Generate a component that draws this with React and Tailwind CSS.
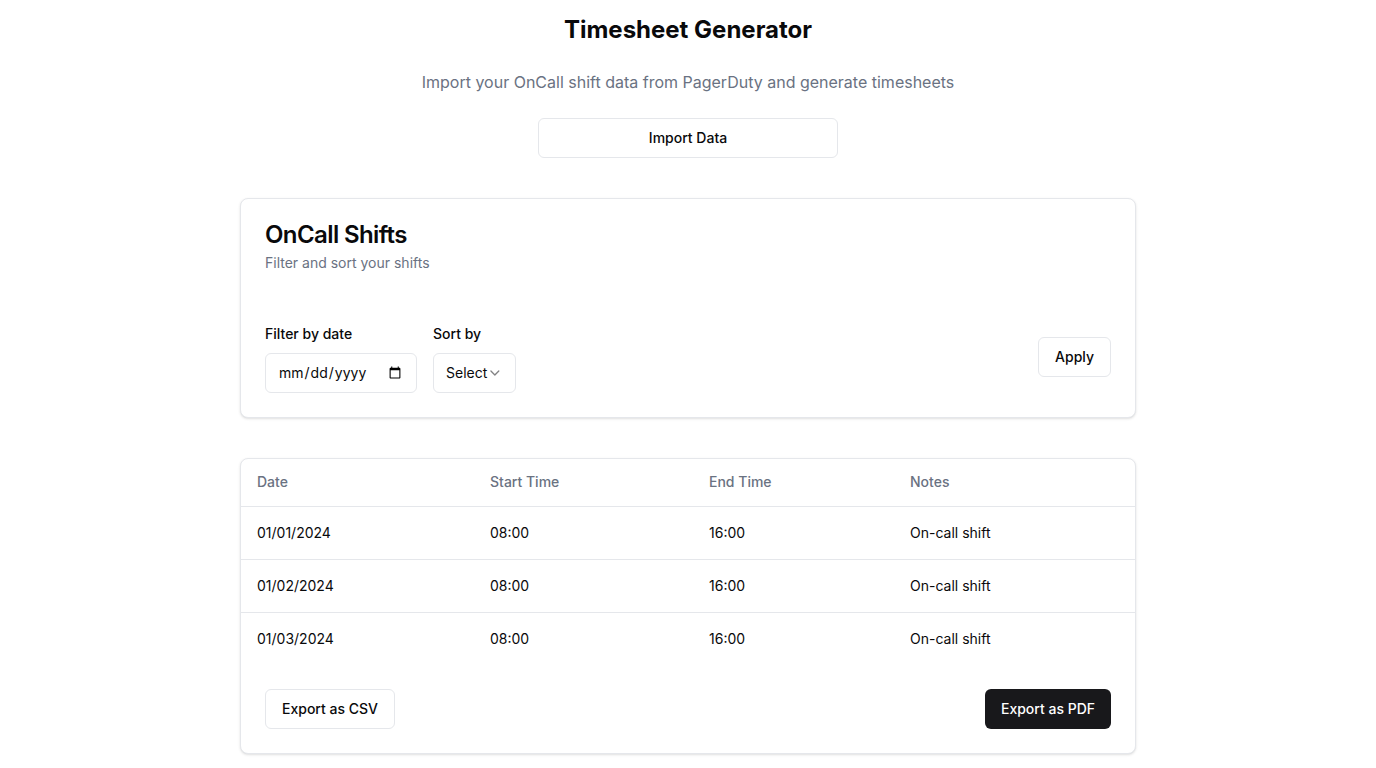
import React from 'react';
import { ChevronDown } from 'lucide-react';

const shifts = [
    { date: '01/01/2024', start: '08:00', end: '16:00', notes: 'On-call shift' },
    { date: '01/02/2024', start: '08:00', end: '16:00', notes: 'On-call shift' },
    { date: '01/03/2024', start: '08:00', end: '16:00', notes: 'On-call shift' },
];

const App = () => {
    return (
        <div className="min-h-screen bg-white text-[#09090b]" style={{ fontFamily: 'Inter, "Noto Sans", sans-serif' }}>
            <div className="max-w-4xl mx-auto pt-[14px] pb-10">
                <h1 className="text-2xl font-bold text-center">Timesheet Generator</h1>
                <p className="mt-6 text-center text-gray-500">Import your OnCall shift data from PagerDuty and generate timesheets</p>

                <div className="mt-6 flex justify-center">
                    <button className="w-[300px] h-10 rounded-md border border-gray-200 bg-white text-sm font-medium">
                        Import Data
                    </button>
                </div>

                {/* Filters card */}
                <div className="mt-10 rounded-lg border border-gray-200 bg-white shadow-sm">
                    <div className="p-6 flex flex-col gap-1.5">
                        <h3 className="text-2xl font-semibold leading-none tracking-tight">OnCall Shifts</h3>
                        <p className="text-sm text-gray-500">Filter and sort your shifts</p>
                    </div>
                    <div className="px-6 pb-6 pt-[27px] flex items-center justify-between">
                        <div className="flex items-end gap-4">
                            <div className="flex flex-col gap-[9px]">
                                <label className="text-sm font-medium">Filter by date</label>
                                <input
                                    type="date"
                                    className="w-[152px] h-10 rounded-md border border-gray-200 px-3 text-sm"
                                />
                            </div>
                            <div className="flex flex-col gap-[9px]">
                                <label className="text-sm font-medium">Sort by</label>
                                <button className="w-[83px] h-10 rounded-md border border-gray-200 pl-3 pr-3 text-sm flex items-center">
                                    <span>Select</span>
                                    <ChevronDown className="w-4 h-4 opacity-50" />
                                </button>
                            </div>
                        </div>
                        <button className="h-10 px-4 mb-1 rounded-md border border-gray-200 bg-white text-sm font-medium">
                            Apply
                        </button>
                    </div>
                </div>

                {/* Table card */}
                <div className="mt-10 rounded-lg border border-gray-200 bg-white shadow-sm">
                    <table className="w-full text-sm table-fixed">
                        <thead>
                            <tr className="border-b border-gray-200">
                                <th className="w-[233px] h-[47px] px-4 text-left font-medium text-gray-500">Date</th>
                                <th className="w-[219px] h-[47px] px-4 text-left font-medium text-gray-500">Start Time</th>
                                <th className="w-[201px] h-[47px] px-4 text-left font-medium text-gray-500">End Time</th>
                                <th className="h-[47px] px-4 text-left font-medium text-gray-500">Notes</th>
                            </tr>
                        </thead>
                        <tbody>
                            {shifts.map((s, i) => (
                                <tr key={s.date} className={i < shifts.length - 1 ? 'border-b border-gray-200' : ''}>
                                    <td className="p-4">{s.date}</td>
                                    <td className="p-4">{s.start}</td>
                                    <td className="p-4">{s.end}</td>
                                    <td className="p-4">{s.notes}</td>
                                </tr>
                            ))}
                        </tbody>
                    </table>
                    <div className="p-6 flex justify-between">
                        <button className="h-10 px-4 rounded-md border border-gray-200 bg-white text-sm font-medium">
                            Export as CSV
                        </button>
                        <button className="h-10 px-4 rounded-md bg-[#18181b] text-white text-sm font-medium">
                            Export as PDF
                        </button>
                    </div>
                </div>
            </div>
        </div>
    );
};

export default App;
